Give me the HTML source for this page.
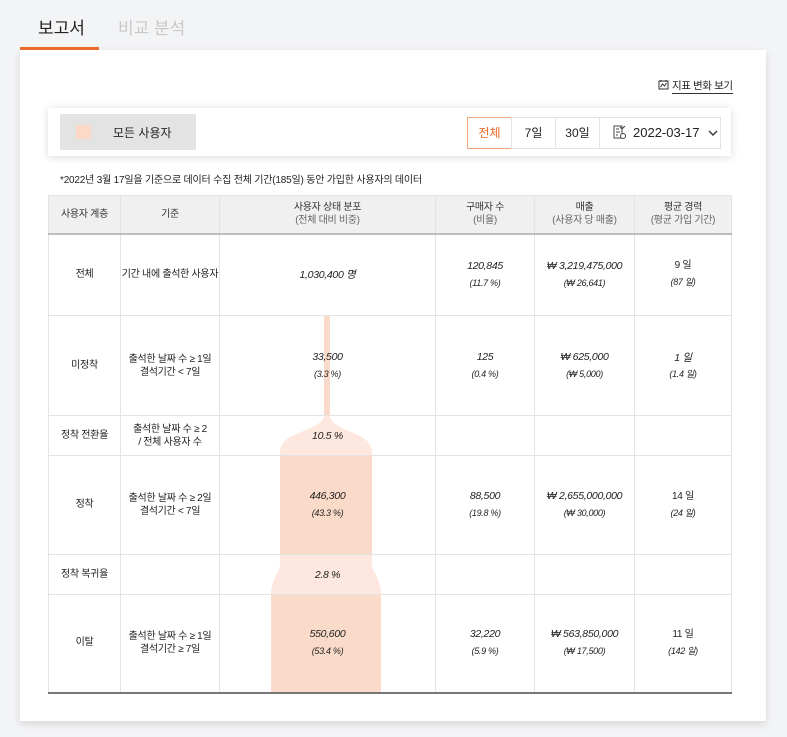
<!DOCTYPE html>
<html><head><meta charset="utf-8"><style>
*{margin:0;padding:0;box-sizing:border-box}
body{width:787px;height:737px;background:#f3f4f6;font-family:"Liberation Sans","Noto Sans CJK KR",sans-serif;color:#222;position:relative;overflow:hidden}
.abs{position:absolute}
.tab1{left:38px;top:14px;font-size:17px;color:#222}
.tab2{left:118px;top:14px;font-size:17px;color:#c8c8c8}
.uline{left:20px;top:47px;width:79px;height:3px;background:#ec6b2c}
.card{left:20px;top:50px;width:746px;height:671px;background:#fff;box-shadow:0 3px 8px rgba(0,0,0,.12)}
.link{left:658px;top:78px;font-size:10.5px;color:#222;letter-spacing:-0.4px}
.link span{border-bottom:1px solid #333;padding-bottom:1px}
.filter{left:48px;top:108px;width:683px;height:48px;background:#fff;box-shadow:0 1px 8px rgba(0,0,0,.15)}
.allu{left:60px;top:114px;width:136px;height:36px;background:#e3e3e3;font-size:12px}
.sw{position:absolute;left:16px;top:11px;width:15px;height:14px;background:#fcd9c6}
.allu b{font-weight:normal;position:absolute;left:53px;top:10px}
.btn{top:117px;height:32px;border:1px solid #e2e2e2;font-size:12px;text-align:center;line-height:30px;background:#fff}
.note{left:60px;top:171px;font-size:10px;color:#222;letter-spacing:-0.2px}
.tw{left:48px;top:195px;width:683px;height:497px}
table{position:absolute;left:0;top:0;width:683px;border-collapse:collapse;table-layout:fixed;font-size:10px;letter-spacing:-0.3px}
td,th{border:1px solid #e4e4e4;text-align:center;vertical-align:middle;font-weight:normal;line-height:16px;white-space:nowrap}
th{background:#f0f0f0;color:#333;font-size:10px;border-bottom:2px solid #bdbdbd;line-height:13px}
th small{color:#666;font-size:10px}
.n{font-style:italic;font-size:10.5px}
.s{font-style:italic;font-size:9px}
tr.last td{border-bottom:2px solid #777}
</style></head><body>
<div class="abs tab1">보고서</div>
<div class="abs tab2">비교 분석</div>
<div class="abs card"></div>
<div class="abs uline"></div>
<div class="abs link"><svg width="11" height="11" viewBox="0 0 11 11" style="vertical-align:-1px;margin-right:3px"><rect x="1" y="2" width="9" height="8" fill="none" stroke="#333"/><path d="M3 1v2M8 1v2M2.5 8l2-3 2 2 2-3" fill="none" stroke="#333"/></svg><span>지표 변화 보기</span></div>
<div class="abs filter"></div>
<div class="abs allu"><div class="sw"></div><b>모든 사용자</b></div>
<div class="abs btn" style="left:467px;width:45px;border-color:#f3a67a;color:#ec6b2c">전체</div>
<div class="abs btn" style="left:511px;width:45px">7일</div>
<div class="abs btn" style="left:555px;width:45px">30일</div>
<div class="abs btn" style="left:599px;width:122px;font-size:13px;text-align:left;padding-left:13px"><svg width="14" height="15" viewBox="0 0 14 15" style="vertical-align:-3px;margin-right:6px"><path d="M1 1h8v12H1z" fill="none" stroke="#444"/><path d="M3 4h3M3 7h4M3 10h2" stroke="#444"/><circle cx="10" cy="11" r="2.5" fill="#fff" stroke="#444"/><path d="M7 2l2 2 3-3" fill="none" stroke="#444"/></svg>2022-03-17 <svg width="10" height="8" viewBox="0 0 10 8" style="margin-left:5px"><path d="M1 2l4 4 4-4" fill="none" stroke="#333" stroke-width="1.4"/></svg></div>
<div class="abs note">*2022년 3월 17일을 기준으로 데이터 수집 전체 기간(185일) 동안 가입한 사용자의 데이터</div>
<div class="abs tw">
<svg class="abs" style="left:0;top:0" width="683" height="497">
<path d="M276 120H282V220Q282 228 296 234L314 242Q324 248 324 258V260H232V258Q232 248 242 242L260 234Q276 228 276 220Z" fill="#fde7de"/>
<rect x="276" y="120" width="6" height="100" fill="#fadbc9"/>
<rect x="232" y="260" width="92" height="99" fill="#fadbc9"/>
<path d="M232 359H324V368Q324 374 328 380L330 385Q333 391 333 399H223Q223 391 226 385L228 380Q232 374 232 368Z" fill="#fde7de"/>
<rect x="223" y="399" width="110" height="98" fill="#fadbc9"/>
</svg>
<table>
<colgroup><col style="width:72px"><col style="width:99px"><col style="width:216px"><col style="width:99px"><col style="width:100px"><col style="width:97px"></colgroup>
<tr style="height:38px"><th>사용자 계층</th><th>기준</th><th>사용자 상태 분포<br><small>(전체 대비 비중)</small></th><th>구매자 수<br><small>(비율)</small></th><th>매출<br><small>(사용자 당 매출)</small></th><th>평균 경력<br><small>(평균 가입 기간)</small></th></tr>
<tr style="height:82px"><td>전체</td><td>기간 내에 출석한 사용자</td><td class="n">1,030,400 명</td><td><span class="n">120,845</span><br><span class="s">(11.7 %)</span></td><td><span class="n">₩ 3,219,475,000</span><br><span class="s">(₩ 26,641)</span></td><td>9 일<br><span class="s">(87 일)</span></td></tr>
<tr style="height:100px"><td>미정착</td><td style="line-height:13px">출석한 날짜 수 ≥ 1일<br>결석기간 &lt; 7일</td><td><span class="n">33,500</span><br><span class="s">(3.3 %)</span></td><td><span class="n">125</span><br><span class="s">(0.4 %)</span></td><td><span class="n">₩ 625,000</span><br><span class="s">(₩ 5,000)</span></td><td class="n">1 일<br><span class="s">(1.4 일)</span></td></tr>
<tr style="height:40px"><td>정착 전환율</td><td style="line-height:13px">출석한 날짜 수 ≥ 2<br>/ 전체 사용자 수</td><td class="n">10.5 %</td><td></td><td></td><td></td></tr>
<tr style="height:99px"><td>정착</td><td style="line-height:13px">출석한 날짜 수 ≥ 2일<br>결석기간 &lt; 7일</td><td><span class="n">446,300</span><br><span class="s">(43.3 %)</span></td><td><span class="n">88,500</span><br><span class="s">(19.8 %)</span></td><td><span class="n">₩ 2,655,000,000</span><br><span class="s">(₩ 30,000)</span></td><td>14 일<br><span class="s">(24 일)</span></td></tr>
<tr style="height:40px"><td>정착 복귀율</td><td></td><td class="n">2.8 %</td><td></td><td></td><td></td></tr>
<tr class="last" style="height:98px"><td>이탈</td><td style="line-height:13px">출석한 날짜 수 ≥ 1일<br>결석기간 ≥ 7일</td><td><span class="n">550,600</span><br><span class="s">(53.4 %)</span></td><td><span class="n">32,220</span><br><span class="s">(5.9 %)</span></td><td><span class="n">₩ 563,850,000</span><br><span class="s">(₩ 17,500)</span></td><td>11 일<br><span class="s">(142 일)</span></td></tr>
</table>
</div>
</body></html>
